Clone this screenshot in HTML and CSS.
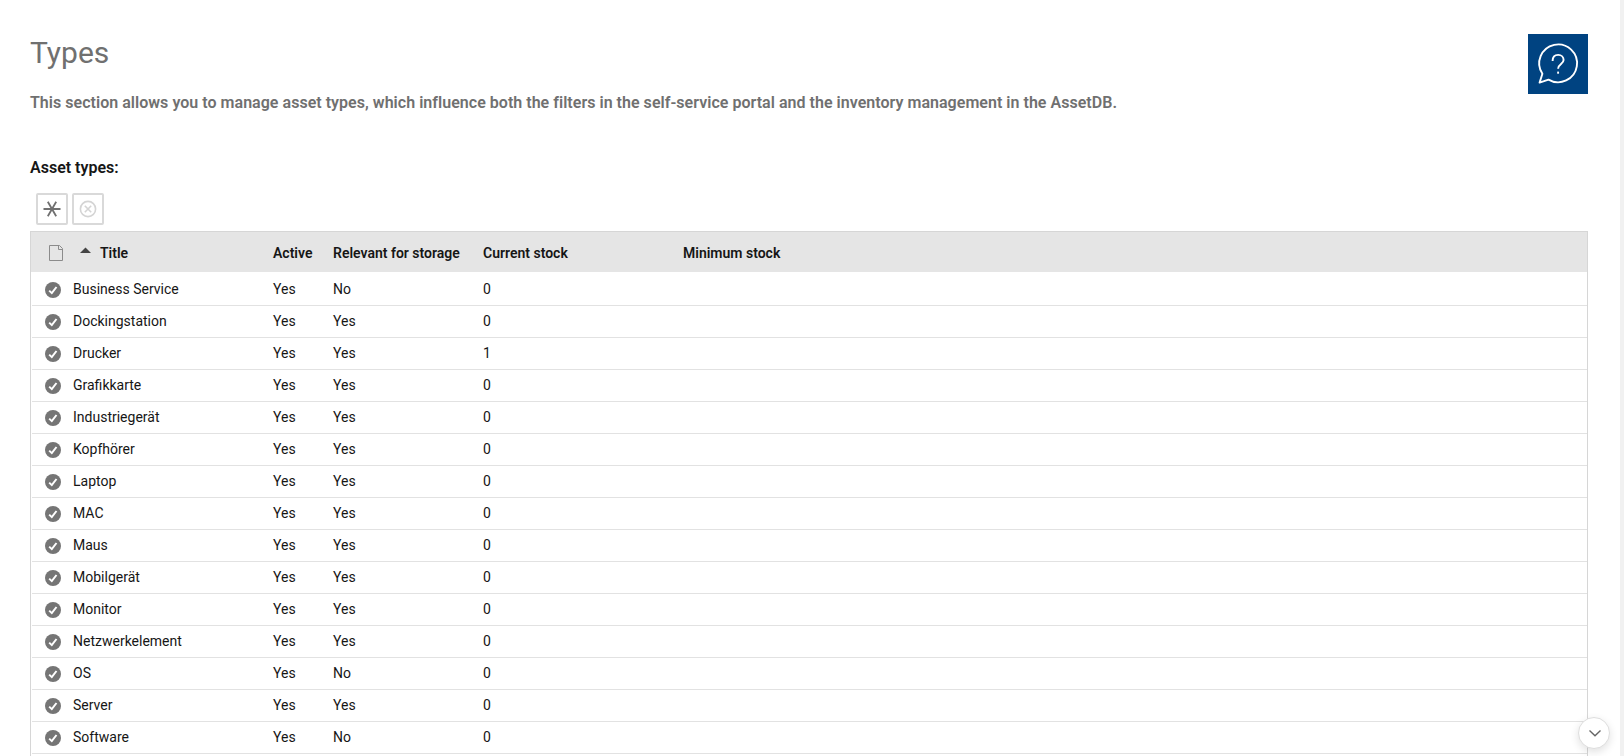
FILE: index.html
```html
<!DOCTYPE html>
<html lang="en">
<head>
<meta charset="utf-8">
<title>Types</title>
<link rel="stylesheet" href="styles.css">
</head>
<body>
<svg class="symbols" aria-hidden="true">
  <symbol id="check" viewBox="0 0 16 16"><circle cx="8" cy="8" r="8" fill="#757575"/><path d="M4.2 8.6 L6.8 11.1 L11.5 5" fill="none" stroke="#fff" stroke-width="2"/></symbol>
</svg>
<main class="page">
  <header class="head">
    <div>
      <h1 class="title">Types</h1>
      <p class="intro">This section allows you to manage asset types, which influence both the filters in the self-service portal and the inventory management in the AssetDB.</p>
    </div>
    <button class="help" aria-label="Help">
      <svg width="60" height="60" viewBox="0 0 60 60" fill="none" stroke="#fff" stroke-width="1.9" stroke-linejoin="round"><path d="M14.4 39.8 A18.9 18.9 0 1 1 20.5 45.6 L11.6 48.6 Z"/><path d="M24.6 27 C24.6 23 27 20.9 30.2 20.9 C33.4 20.9 35.6 23.2 35.6 26.1 C35.6 30 30.1 30.2 30.1 34.8"/><path d="M30.1 37.6 V39.7"/></svg>
    </button>
  </header>
  <h2 class="subtitle">Asset types:</h2>
  <div class="toolbar">
    <button class="tool" aria-label="New"><svg width="28" height="28" viewBox="0 0 28 28" fill="none" stroke="#707070" stroke-width="1.8"><path d="M5.5 14 H22.5 M9.8 6.8 L18.2 21.2 M18.2 6.8 L9.8 21.2"/></svg></button>
    <button class="tool" aria-label="Delete"><svg width="28" height="28" viewBox="0 0 28 28" fill="none" stroke="#d4d4d4" stroke-width="1.6"><circle cx="14" cy="14" r="7.6"/><path d="M10.8 10.8 L17.2 17.2 M17.2 10.8 L10.8 17.2"/></svg></button>
  </div>
  <section class="table">
    <div class="row row-head">
      <div class="sort"><svg width="48" height="20" viewBox="0 0 48 20"><path d="M1.5 2.5 H11.5 L14.5 5.5 V17.5 H1.5 Z M10.5 2.5 V6.5 H14.5" fill="none" stroke="#8b8b8b"/><path d="M32 10 L37.5 4.5 L43 10 Z" fill="#444"/></svg>Title</div>
      <div>Active</div><div>Relevant for storage</div><div>Current stock</div><div>Minimum stock</div>
    </div>
    <div class="rows">
      <div class="row"><svg class="check"><use href="#check"/></svg><div>Business Service</div><div>Yes</div><div>No</div><div>0</div></div>
      <div class="row"><svg class="check"><use href="#check"/></svg><div>Dockingstation</div><div>Yes</div><div>Yes</div><div>0</div></div>
      <div class="row"><svg class="check"><use href="#check"/></svg><div>Drucker</div><div>Yes</div><div>Yes</div><div>1</div></div>
      <div class="row"><svg class="check"><use href="#check"/></svg><div>Grafikkarte</div><div>Yes</div><div>Yes</div><div>0</div></div>
      <div class="row"><svg class="check"><use href="#check"/></svg><div>Industriegerät</div><div>Yes</div><div>Yes</div><div>0</div></div>
      <div class="row"><svg class="check"><use href="#check"/></svg><div>Kopfhörer</div><div>Yes</div><div>Yes</div><div>0</div></div>
      <div class="row"><svg class="check"><use href="#check"/></svg><div>Laptop</div><div>Yes</div><div>Yes</div><div>0</div></div>
      <div class="row"><svg class="check"><use href="#check"/></svg><div>MAC</div><div>Yes</div><div>Yes</div><div>0</div></div>
      <div class="row"><svg class="check"><use href="#check"/></svg><div>Maus</div><div>Yes</div><div>Yes</div><div>0</div></div>
      <div class="row"><svg class="check"><use href="#check"/></svg><div>Mobilgerät</div><div>Yes</div><div>Yes</div><div>0</div></div>
      <div class="row"><svg class="check"><use href="#check"/></svg><div>Monitor</div><div>Yes</div><div>Yes</div><div>0</div></div>
      <div class="row"><svg class="check"><use href="#check"/></svg><div>Netzwerkelement</div><div>Yes</div><div>Yes</div><div>0</div></div>
      <div class="row"><svg class="check"><use href="#check"/></svg><div>OS</div><div>Yes</div><div>No</div><div>0</div></div>
      <div class="row"><svg class="check"><use href="#check"/></svg><div>Server</div><div>Yes</div><div>Yes</div><div>0</div></div>
      <div class="row"><svg class="check"><use href="#check"/></svg><div>Software</div><div>Yes</div><div>No</div><div>0</div></div>
    </div>
  </section>
</main>
<button class="scroll-down" aria-label="Scroll down"><svg width="30" height="30" viewBox="0 0 30 30" fill="none" stroke="#666" stroke-width="1.4"><path d="M10.5 12.5 L16 17.8 L21.5 12.5"/></svg></button>
</body>
</html>
```
FILE: styles.css
```css
* { box-sizing: border-box; }
body {
  margin: 0;
  height: 756px;
  overflow: hidden;
  font: 14px/20px Roboto, "Liberation Sans", sans-serif;
  color: #161616;
  background: #fff;
}
.symbols { position: absolute; width: 0; height: 0; }
button { padding: 0; }
svg { display: block; }
.page {
  display: flex;
  flex-direction: column;
  height: 756px;
  padding: 34px 32px 0 30px;
  border-right: 4px solid #f1f1f1;
}
.head { display: flex; justify-content: space-between; height: 120px; }
.title { margin: 0; font-size: 30px; line-height: 38px; font-weight: 400; color: #707070; }
.intro { margin: 21px 0 0; font-size: 16px; line-height: 20px; font-weight: 600; letter-spacing: .03px; color: #707070; }
.help { width: 60px; height: 60px; border: 0; background: #004381; }
.subtitle { margin: 4px 0 0; font-size: 16px; line-height: 20px; font-weight: 600; color: #161616; }
.toolbar { display: flex; gap: 4px; margin: 15px 0 6px 6px; }
.tool { width: 32px; height: 32px; border: 2px solid #d9d9d9; border-radius: 2px; background: #fff; }
.table { flex: 1; border: solid #d6d6d6; border-width: 1px 1px 0; }
.row {
  display: grid;
  grid-template-columns: 10px 31px 200px 60px 150px 200px 1fr;
  align-items: center;
  height: 32px;
  border-bottom: 1px solid #e2e2e2;
}
.row > div { padding-bottom: 1px; }
.row > div:nth-child(2) { grid-column: 3; }
.row > .check { grid-column: 2; width: 16px; height: 16px; margin: 1px 0 0 3px; }
.rows { padding: 2px 0 0 1px; }
.row.row-head {
  grid-template-columns: 242px 60px 150px 200px 1fr;
  height: 40px;
  padding-top: 2px;
  border: 0;
  background: #e5e5e5;
  font-weight: 600;
}
.row.row-head > div { padding-bottom: 0; }
.row.row-head > div:nth-child(2) { grid-column: auto; }
.sort { display: flex; padding-left: 17px; }
.sort svg { margin-right: 4px; }
.scroll-down {
  position: absolute;
  left: 1578px;
  top: 717px;
  width: 32px;
  height: 32px;
  border: 1px solid #dedede;
  border-radius: 50%;
  background: #fff;
  box-shadow: 0 3px 8px rgba(0, 0, 0, .12);
}
```
